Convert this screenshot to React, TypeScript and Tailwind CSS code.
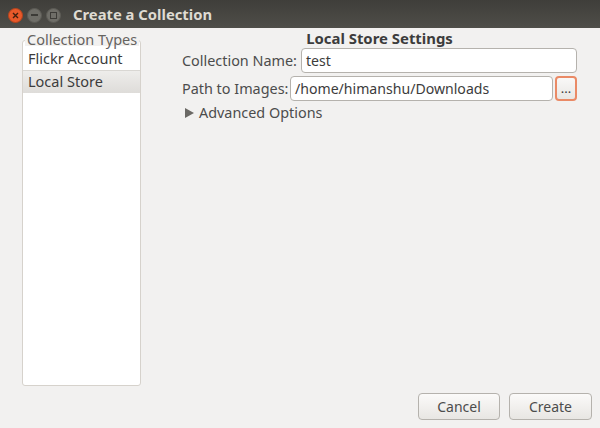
const FONT = "font-['Noto_Sans',sans-serif]"

function WindowButton({ children, className }: { children: React.ReactNode; className: string }) {
  return (
    <div className={`flex h-[15px] w-[15px] items-center justify-center rounded-full border ${className}`}>
      {children}
    </div>
  )
}

function TitleBar() {
  return (
    <div className="flex h-[28px] items-center bg-gradient-to-b from-[#3f3e3a] to-[#4f4e49] pl-[8px]">
      <div className="mt-[2px] flex items-center gap-[4px]">
        <WindowButton className="border-[#b5441c] bg-[#e9592a]">
          <svg width="7" height="7" viewBox="0 0 7 7" stroke="#41200f" strokeWidth="1.4">
            <path d="M1 1l5 5M6 1L1 6" />
          </svg>
        </WindowButton>
        <WindowButton className="border-[#5c5b55] bg-[#6f6e68]">
          <div className="h-[2px] w-[7px] bg-[#3c3b37]" />
        </WindowButton>
        <WindowButton className="border-[#5c5b55] bg-[#6f6e68]">
          <div className="h-[7px] w-[7px] border border-[#3c3b37]" />
        </WindowButton>
      </div>
      <span className="ml-[12px] mt-[1px] text-[14.8px] font-bold text-[#dfdbd2]">Create a Collection</span>
    </div>
  )
}

function CollectionTypes() {
  return (
    <div className="relative mt-[12px] ml-[22px] h-[346px] w-[119px] rounded-[3px] border border-[#d6d2cc] bg-white pt-[6px]">
      <span className="absolute -top-[9px] left-[2px] whitespace-nowrap bg-[#f2f1f0] px-[2px] text-[14.5px] leading-[14px] text-[#66635f]">
        Collection Types
      </span>
      <div className="flex h-[23px] items-center px-[5px] pb-[2px] text-[14.5px] leading-[18px] text-[#3c3c3c]">Flickr Account</div>
      <div className="flex h-[23px] items-center border-t border-[#d9d7d3] bg-gradient-to-b from-[#eeedeb] to-[#dedcd9] px-[5px] pb-[2px] text-[14.5px] leading-[18px] text-[#3c3c3c]">
        Local Store
      </div>
    </div>
  )
}

function TextField({ value, className }: { value: string; className: string }) {
  return (
    <div className={`flex h-[25px] items-center rounded-[4px] border border-[#b5b2ad] bg-white px-[4px] text-[14.1px] text-[#3c3c3c] ${className}`}>
      {value}
    </div>
  )
}

function Settings() {
  return (
    <div className="ml-[41px] mt-[2px] w-[395px] text-[14.4px] text-[#4c4c4c]">
      <div className="h-[18px] text-center text-[14.9px] leading-[17px] font-bold text-[#3c3c3c]">Local Store Settings</div>
      <div className="flex h-[25px] items-center">
        <span className="w-[119px] whitespace-nowrap">Collection Name:</span>
        <TextField className="w-[276px]" value="test" />
      </div>
      <div className="mt-[3px] flex h-[25px] items-center">
        <span className="w-[108px] whitespace-nowrap">Path to Images:</span>
        <TextField className="w-[263px]" value="/home/himanshu/Downloads" />
        <div className="ml-[2px] flex h-[25px] w-[22px] items-center justify-center rounded-[4px] border-2 border-[#ea8a66] bg-gradient-to-b from-[#f9f8f7] to-[#e9e7e4] text-[13px] text-[#3c3c3c]">
          ...
        </div>
      </div>
      <div className="mt-[2px] flex h-[19px] items-center gap-[5px] pl-[3px]">
        <svg width="9" height="10" viewBox="0 0 9 10">
          <path d="M0 0l9 5-9 5z" fill="#6b6965" />
        </svg>
        <span>Advanced Options</span>
      </div>
    </div>
  )
}

function FooterButton({ label, className }: { label: string; className: string }) {
  return (
    <div className={`flex h-[27px] items-center justify-center rounded-[4px] border border-[#b5b2ad] bg-gradient-to-b from-[#fbfaf9] to-[#e8e6e3] text-[14px] text-[#4c4c4c] ${className}`}>
      {label}
    </div>
  )
}

export default function App() {
  return (
    <div className={`flex h-[428px] w-[600px] flex-col overflow-hidden bg-[#f2f1f0] ${FONT}`}>
      <TitleBar />
      <div className="flex h-[365px]">
        <CollectionTypes />
        <Settings />
      </div>
      <div className="flex justify-end gap-[9px] pr-[8px]">
        <FooterButton className="w-[82px]" label="Cancel" />
        <FooterButton className="w-[83px]" label="Create" />
      </div>
    </div>
  )
}
